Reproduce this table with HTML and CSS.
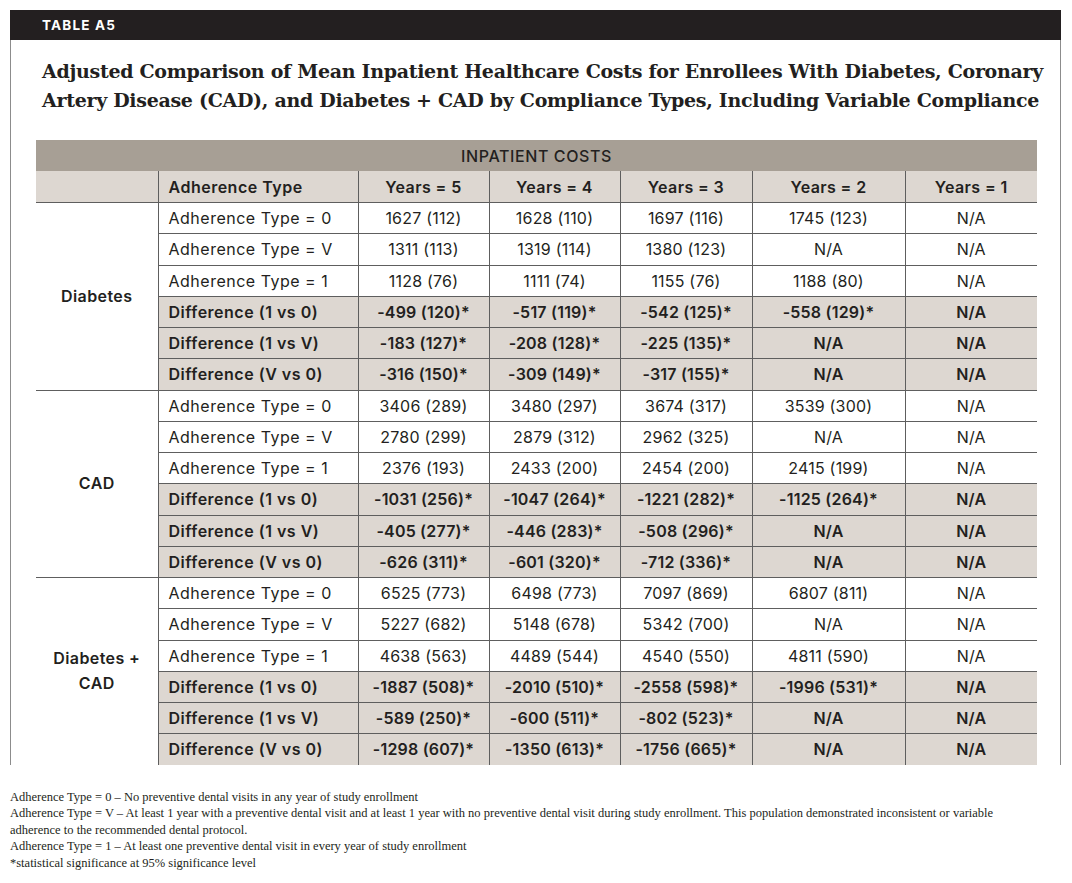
FILE: index.html
```html
<!DOCTYPE html>
<html lang="en">
<head>
<meta charset="utf-8">
<title>Table A5</title>
<link rel="stylesheet" href="styles.css">
</head>
<body>
<div class="card">
  <div class="bar">TABLE A5</div>
  <div class="card-body">
    <h1 class="title">Adjusted Comparison of Mean Inpatient Healthcare Costs for Enrollees With Diabetes, Coronary<br>Artery Disease (CAD), and Diabetes + CAD by Compliance Types, Including Variable Compliance</h1>
    <table class="data">
      <colgroup>
        <col class="c-group"><col class="c-type"><col class="c-y"><col class="c-y"><col class="c-y3"><col class="c-y2"><col class="c-y1">
      </colgroup>
      <thead>
        <tr class="h1"><th colspan="7">INPATIENT COSTS</th></tr>
        <tr class="h2"><th class="blank"></th><th class="lft">Adherence Type</th><th>Years = 5</th><th>Years = 4</th><th>Years = 3</th><th>Years = 2</th><th>Years = 1</th></tr>
      </thead>
      <tbody>
        <tr><td class="grp" rowspan="6">Diabetes</td><td class="lft">Adherence Type = 0</td><td>1627 (112)</td><td>1628 (110)</td><td>1697 (116)</td><td>1745 (123)</td><td>N/A</td></tr>
        <tr><td class="lft">Adherence Type = V</td><td>1311 (113)</td><td>1319 (114)</td><td>1380 (123)</td><td>N/A</td><td>N/A</td></tr>
        <tr><td class="lft">Adherence Type = 1</td><td>1128 (76)</td><td>1111 (74)</td><td>1155 (76)</td><td>1188 (80)</td><td>N/A</td></tr>
        <tr class="diff"><td class="lft">Difference (1 vs 0)</td><td>-499 (120)*</td><td>-517 (119)*</td><td>-542 (125)*</td><td>-558 (129)*</td><td>N/A</td></tr>
        <tr class="diff"><td class="lft">Difference (1 vs V)</td><td>-183 (127)*</td><td>-208 (128)*</td><td>-225 (135)*</td><td>N/A</td><td>N/A</td></tr>
        <tr class="diff last"><td class="lft">Difference (V vs 0)</td><td>-316 (150)*</td><td>-309 (149)*</td><td>-317 (155)*</td><td>N/A</td><td>N/A</td></tr>

        <tr><td class="grp" rowspan="6">CAD</td><td class="lft">Adherence Type = 0</td><td>3406 (289)</td><td>3480 (297)</td><td>3674 (317)</td><td>3539 (300)</td><td>N/A</td></tr>
        <tr><td class="lft">Adherence Type = V</td><td>2780 (299)</td><td>2879 (312)</td><td>2962 (325)</td><td>N/A</td><td>N/A</td></tr>
        <tr><td class="lft">Adherence Type = 1</td><td>2376 (193)</td><td>2433 (200)</td><td>2454 (200)</td><td>2415 (199)</td><td>N/A</td></tr>
        <tr class="diff"><td class="lft">Difference (1 vs 0)</td><td>-1031 (256)*</td><td>-1047 (264)*</td><td>-1221 (282)*</td><td>-1125 (264)*</td><td>N/A</td></tr>
        <tr class="diff"><td class="lft">Difference (1 vs V)</td><td>-405 (277)*</td><td>-446 (283)*</td><td>-508 (296)*</td><td>N/A</td><td>N/A</td></tr>
        <tr class="diff last"><td class="lft">Difference (V vs 0)</td><td>-626 (311)*</td><td>-601 (320)*</td><td>-712 (336)*</td><td>N/A</td><td>N/A</td></tr>

        <tr><td class="grp end" rowspan="6">Diabetes +<br>CAD</td><td class="lft">Adherence Type = 0</td><td>6525 (773)</td><td>6498 (773)</td><td>7097 (869)</td><td>6807 (811)</td><td>N/A</td></tr>
        <tr><td class="lft">Adherence Type = V</td><td>5227 (682)</td><td>5148 (678)</td><td>5342 (700)</td><td>N/A</td><td>N/A</td></tr>
        <tr><td class="lft">Adherence Type = 1</td><td>4638 (563)</td><td>4489 (544)</td><td>4540 (550)</td><td>4811 (590)</td><td>N/A</td></tr>
        <tr class="diff"><td class="lft">Difference (1 vs 0)</td><td>-1887 (508)*</td><td>-2010 (510)*</td><td>-2558 (598)*</td><td>-1996 (531)*</td><td>N/A</td></tr>
        <tr class="diff"><td class="lft">Difference (1 vs V)</td><td>-589 (250)*</td><td>-600 (511)*</td><td>-802 (523)*</td><td>N/A</td><td>N/A</td></tr>
        <tr class="diff final"><td class="lft">Difference (V vs 0)</td><td>-1298 (607)*</td><td>-1350 (613)*</td><td>-1756 (665)*</td><td>N/A</td><td>N/A</td></tr>
      </tbody>
    </table>
  </div>
</div>
<div class="notes">
  <p>Adherence Type = 0 – No preventive dental visits in any year of study enrollment</p>
  <p>Adherence Type = V – At least 1 year with a preventive dental visit and at least 1 year with no preventive dental visit during study enrollment. This population demonstrated inconsistent or variable adherence to the recommended dental protocol.</p>
  <p>Adherence Type = 1 – At least one preventive dental visit in every year of study enrollment</p>
  <p>*statistical significance at 95% significance level</p>
</div>
</body>
</html>
```
FILE: styles.css
```css
html, body {
  margin: 0;
  padding: 0;
  background: #ffffff;
}

body {
  color: #231f20;
  font-family: "Inter", "Liberation Sans", sans-serif;
}

.card {
  margin: 10px 0 0 10px;
  width: 1051px;
}

.bar {
  background: #231f20;
  color: #ffffff;
  height: 30px;
  line-height: 30px;
  padding-left: 32px;
  font-family: "Inter", "Liberation Sans", sans-serif;
  font-weight: 700;
  font-size: 13.5px;
  letter-spacing: 1.2px;
}

.card-body {
  border-left: 1px solid #8c8c8c;
  border-right: 1px solid #8c8c8c;
  padding: 17px 0 0 25px;
}

.title {
  margin: 0 0 0 6px;
  font-family: "DejaVu Serif", "Liberation Serif", serif;
  font-weight: 700;
  font-size: 19px;
  line-height: 29px;
  white-space: nowrap;
  letter-spacing: -0.3px;
  color: #231f20;
}

.data {
  margin-top: 25px;
  width: 1001px;
  border-collapse: collapse;
  table-layout: fixed;
  font-size: 16px;
  letter-spacing: 0.2px;
}

.c-group { width: 122px; }
.c-type { width: 200px; }
.c-y { width: 131px; }
.c-y3 { width: 132px; }
.c-y2 { width: 153px; }
.c-y1 { width: 132px; }

.data th,
.data td {
  padding: 0;
  text-align: center;
  height: 30.25px;
  border: 1px solid #5e5e5e;
}

.data th:first-child,
.data td.grp {
  border-left: none;
}

.data th:last-child,
.data td:last-child {
  border-right: none;
}

.data .lft {
  text-align: left;
  padding-left: 10px;
  letter-spacing: 0.5px;
}

.h1 th {
  background: #a79f95;
  font-weight: 500;
  border: none;
  height: 31px;
  letter-spacing: 0.6px;
}

.h2 th {
  background: #ddd7d1;
  font-weight: 600;
  border-top: none;
  height: 31px;
  letter-spacing: 0.4px;
}

.data td {
  font-weight: 400;
}

.data td.grp {
  font-weight: 600;
  line-height: 25px;
  letter-spacing: 0.4px;
  background: #ffffff;
}

.data tr.diff td {
  background: #ddd7d1;
  font-weight: 600;
}

.data tr.final td,
.data td.grp.end {
  border-bottom: none;
}

.notes {
  margin-top: 24px;
  padding-left: 10px;
  font-family: "Liberation Serif", "Times New Roman", serif;
  font-size: 12.5px;
  line-height: 16.6px;
  color: #231f20;
}

.notes p {
  margin: 0;
  max-width: 1010px;
}
```
